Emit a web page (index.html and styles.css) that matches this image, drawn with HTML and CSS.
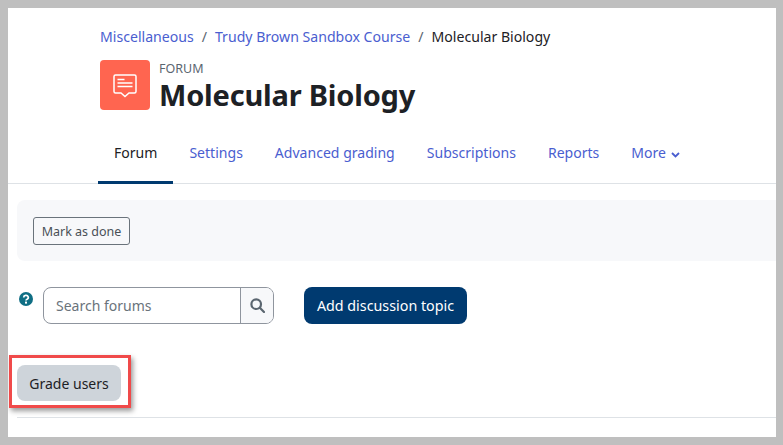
FILE: index.html
```html
<!DOCTYPE html>
<html lang="en">
<head>
<meta charset="utf-8">
<title>Molecular Biology</title>
<link rel="stylesheet" href="styles.css">
</head>
<body>
<main class="page">
  <header class="head">
    <nav class="crumbs">
      <a>Miscellaneous</a><span class="sep">/</span><a>Trudy Brown Sandbox Course</a><span class="sep">/</span><span class="current">Molecular Biology</span>
    </nav>
    <div class="title-row">
      <div class="mod-icon">
        <svg width="26" height="26" viewBox="0 0 26 26" fill="none" stroke="#fff">
          <path d="M3.500 2h19a1.500 1.500 0 0 1 1.500 1.500v15a1.500 1.500 0 0 1-1.500 1.500h-5.500l-4 3.500-4-3.500h-5.500a1.500 1.500 0 0 1-1.500-1.500v-15a1.500 1.500 0 0 1 1.500-1.500z" stroke-width="1.500"/>
          <path d="M5.500 6.500h7M5.500 10h15M5.500 13.500h15" stroke-width="1.500"/>
        </svg>
      </div>
      <div class="title-text">
        <div class="kicker">FORUM</div>
        <h1>Molecular Biology</h1>
      </div>
    </div>
  </header>
  <nav class="tabs">
    <a class="tab active">Forum</a>
    <a class="tab">Settings</a>
    <a class="tab">Advanced grading</a>
    <a class="tab">Subscriptions</a>
    <a class="tab">Reports</a>
    <a class="tab">More
      <svg class="chev" width="9" height="6" viewBox="0 0 9 6" fill="none" stroke="#4a5ed0" stroke-width="1.800"><path d="M1 1l3.500 3.500L8 1"/></svg>
    </a>
  </nav>
  <section class="bar"><button class="done">Mark as done</button></section>
  <section class="actions">
    <svg class="help" width="14" height="14" viewBox="0 0 14 14">
      <circle cx="7" cy="7" r="7" fill="#0f6e84"/>
      <path d="M4.700 5.400a2.300 2 0 1 1 3.400 1.800c-.8.400-1.100.8-1.100 1.400" fill="none" stroke="#fff" stroke-width="1.700"/>
      <rect x="6" y="9.600" width="2" height="2" fill="#fff"/>
    </svg>
    <div class="search">
      <span class="placeholder">Search forums</span>
      <span class="search-btn">
        <svg width="15" height="15" viewBox="0 0 15 15" fill="none" stroke="#5b6670" stroke-width="2.200"><circle cx="6.200" cy="6.200" r="4.800"/><path d="M9.800 9.800l4.200 4.200" stroke-linecap="round"/></svg>
      </span>
    </div>
    <button class="primary">Add discussion topic</button>
  </section>
  <div class="callout"><button class="grade">Grade users</button></div>
  <hr class="rule">
</main>
</body>
</html>
```
FILE: styles.css
```css
* { box-sizing: border-box; }
html, body { margin: 0; height: 100%; }
body {
  background: #bfbfbf;
  padding: 8px 7px 8px 8px;
  font-family: "Noto Sans", "Open Sans", sans-serif;
  color: #1d2125;
  overflow: hidden;
}
.page { background: #fff; height: 429px; overflow: hidden; }
.head { padding: 18px 0 0 92px; }
.crumbs { font-size: 14.100px; line-height: 21px; display: flex; }
.crumbs a { color: #4a5ed0; }
.sep { color: #5b6670; margin: 0 8px; }
.current { color: #1d2125; }
.title-row { display: flex; margin-top: 13px; gap: 9px; }
.mod-icon {
  width: 50px; height: 50px; border-radius: 4px; background: #ff6550;
  display: flex; align-items: center; justify-content: center;
}
.mod-icon svg { margin-top: 2px; }
.kicker { font-size: 12.500px; line-height: 14px; color: #5b6670; margin-top: 2px; }
h1 { margin: 1px 0 0; font-size: 29px; line-height: 36px; font-weight: 700; letter-spacing: -0.200px; }
.tabs {
  display: flex; margin-top: 18px; padding-left: 90px; height: 53px;
  border-bottom: 1px solid #dee2e6; font-size: 14.050px;
}
.tab {
  color: #4a5ed0; padding: 3px 16px 0; height: 53px; line-height: 38px;
  display: block;
}
.tab.active { color: #1d2125; border-bottom: 3px solid #003a70; }
.chev { margin-left: 1px; }
.bar {
  margin: 16px 0 0 9px; height: 61px; background: #f7f8fa; border-radius: 8px 0 0 8px;
  padding: 17px 0 0 16px;
}
button { font-family: inherit; }
.done {
  display: block; height: 28px; width: 97px; padding: 0; font-size: 12.500px; color: #495057;
  background: transparent; border: 1px solid #6a737b; border-radius: 3px;
}
.actions { display: flex; align-items: flex-start; margin: 26px 0 0 11px; }
.help { margin-top: 5px; }
.search {
  display: flex; margin-left: 10px; width: 231px; height: 37px;
  border: 1px solid #8f959e; border-radius: 8px; overflow: hidden;
}
.placeholder { flex: 1; padding-left: 12px; font-size: 14px; line-height: 35px; color: #6a737b; }
.search-btn {
  width: 33px; background: #f7f8fa; border-left: 1px solid #8f959e;
  display: flex; align-items: center; justify-content: center;
}
.primary {
  margin-left: 30px; width: 163px; height: 37px; padding: 0; border: 0; border-radius: 8px;
  background: #003a70; color: #fff; font-size: 14.300px;
}
.callout {
  width: 122px; height: 53px; margin: 31px 0 0 1px; padding: 7px 0 0 5px;
  border: 3px solid #f04a4a; box-shadow: 2px 3px 5px rgba(0,0,0,.4);
}
.grade {
  display: block; width: 104px; height: 36px; padding: 0; border: 0; border-radius: 8px;
  background: #ced4da; color: #1d2125; font-size: 14px;
}
.rule { margin: 9px 0 0 9px; border: 0; border-top: 1px solid #dee2e6; }
```
